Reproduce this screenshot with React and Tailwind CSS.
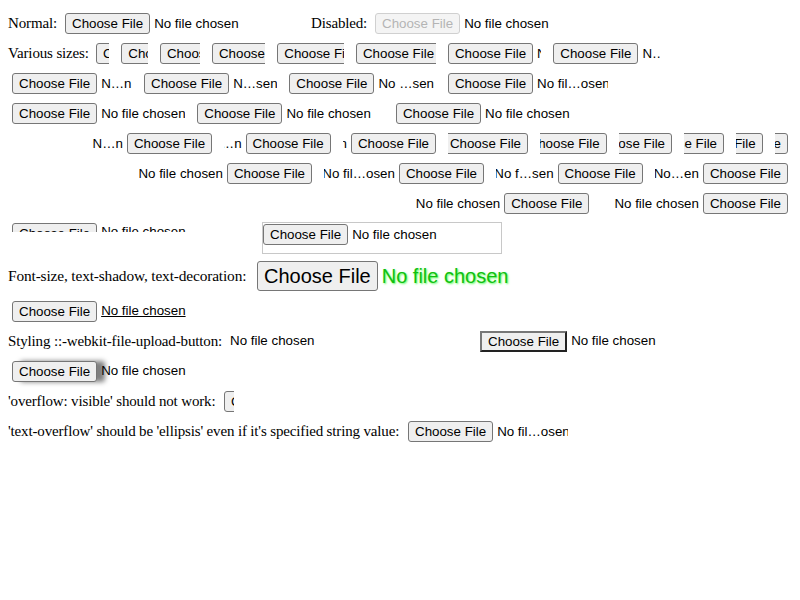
import React from "react";

const W = [
  "w-[13.33px]",
  "w-[26.67px]",
  "w-[40px]",
  "w-[53.33px]",
  "w-[66.67px]",
  "w-[80px]",
  "w-[93.33px]",
  "w-[106.67px]",
  "w-[120px]",
  "w-[133.33px]",
  "w-[146.67px]",
  "w-[160px]",
  "w-[173.33px]",
  "w-[186.67px]",
  "w-[200px]",
];

const LTR_TXT = [
  "N…n", "N…n", "N…n", "N…n", "N…n", "N…n", "N…n", "N…n", "N…n",
  "N…sen", "No …sen", "No fil…osen",
  "No file chosen", "No file chosen", "No file chosen",
];

const RTL_TXT = [
  "N…n", "N…n", "N…n", "N…n", "N…n", "N…n", "N…n", "N…n", "N…n",
  "No…en", "No f…sen", "No fil…osen",
  "No file chosen", "No file chosen", "No file chosen",
];

const sans = "font-['Liberation_Sans',Arial,sans-serif] tracking-normal";

const Btn = ({ disabled }) => (
  <span
    className={`inline-block shrink-0 rounded-[3px] border px-[6px] py-px text-[13.33px] leading-[17px] ${sans} ${
      disabled
        ? "border-[#d0d0d0] bg-[#f4f4f4] text-[#b4b4b4]"
        : "border-[#767676] bg-[#efefef] text-black"
    }`}
  >
    Choose File
  </span>
);

const FileInput = ({ w = "w-[238px]", text = "No file chosen", dir = "ltr", disabled, className = "" }) => (
  <span
    dir={dir}
    className={`flex shrink-0 items-center gap-1 overflow-hidden whitespace-nowrap ${w} ${className}`}
  >
    <Btn disabled={disabled} />
    <span dir="ltr" className={`shrink-0 text-[13.33px] leading-[17px] text-black ${sans}`}>
      {text}
    </span>
  </span>
);

const Row = ({ children, className = "h-[30px]" }) => (
  <div className={`flex items-center whitespace-nowrap ${className}`}>{children}</div>
);

// labels keep a fixed box so the inputs after them sit where the reference has them
const Label = ({ w, children }) => <span className={`shrink-0 ${w}`}>{children}</span>;

export default function App() {
  return (
    <div className="min-h-[600px] w-[800px] bg-white p-2 font-['Liberation_Serif',serif] text-[15px] tracking-[-0.15px] text-black">
      {/* normal / disabled */}
      <Row>
        <Label w="w-[49px]">Normal:</Label>
        <FileInput className="ml-2" />
        <Label w="w-[64px]">
          <span className="ml-2">Disabled:</span>
        </Label>
        <FileInput className="ml-2" disabled />
      </Row>

      {/* various sizes, ltr */}
      <Row>
        <Label w="w-[80px]">Various sizes:</Label>
        <div className="ml-2 flex gap-3">
          {W.slice(0, 8).map((w, i) => (
            <FileInput key={i} w={w} text={LTR_TXT[i]} />
          ))}
        </div>
      </Row>
      <Row>
        <div className="ml-1 flex gap-3">
          {W.slice(8, 12).map((w, i) => (
            <FileInput key={i} w={w} text={LTR_TXT[i + 8]} />
          ))}
        </div>
      </Row>
      <Row>
        <div className="ml-1 flex gap-3">
          {W.slice(12, 15).map((w, i) => (
            <FileInput key={i} w={w} text={LTR_TXT[i + 12]} />
          ))}
        </div>
      </Row>

      {/* various sizes, rtl */}
      <div dir="rtl">
        <Row>
          <div className="mr-1 flex gap-3">
            {W.slice(0, 9).map((w, i) => (
              <FileInput key={i} w={w} dir="rtl" text={RTL_TXT[i]} />
            ))}
          </div>
        </Row>
        <Row>
          <div className="mr-1 flex gap-3">
            {W.slice(9, 13).map((w, i) => (
              <FileInput key={i} w={w} dir="rtl" text={RTL_TXT[i + 9]} />
            ))}
          </div>
        </Row>
        <Row>
          <div className="mr-1 flex gap-3">
            {W.slice(13, 15).map((w, i) => (
              <FileInput key={i} w={w} dir="rtl" text={RTL_TXT[i + 13]} />
            ))}
          </div>
        </Row>
      </div>

      {/* height clipped + padded box */}
      <Row className="h-[38px] items-start pt-1">
        <FileInput className="ml-1 mt-px h-[9px] items-start" />
        <div className="ml-3 flex h-[32px] w-[240px] items-start border border-[#c8c8c8] pt-px">
          <FileInput />
        </div>
      </Row>

      {/* font-size, text-shadow, text-decoration */}
      <Row className="h-[40px]">
        <Label w="w-[241px]">
          <span className="text-[15.4px]">Font-size, text-shadow, text-decoration:</span>
        </Label>
        <span className="ml-2 flex items-center gap-1">
          <span className={`rounded-[3px] border border-[#767676] bg-[#efefef] px-[6px] py-px text-[20px] leading-[26px] ${sans}`}>
            Choose File
          </span>
          <span className={`text-[20px] text-[#10c010] [text-shadow:1px_1px_2px_#5cff5c] ${sans}`}>
            No file chosen
          </span>
        </span>
      </Row>

      <Row>
        <span className="ml-1 flex items-center gap-1">
          <Btn />
          <span className={`text-[13.33px] underline ${sans}`}>No file chosen</span>
        </span>
      </Row>

      {/* styled upload button */}
      <Row>
        <Label w="w-[214px]">Styling ::-webkit-file-upload-button:</Label>
        <span className={`ml-2 w-[246px] shrink-0 text-[13.33px] ${sans}`}>No file chosen</span>
        <span className="ml-1 flex items-center gap-1">
          <span
            className={`border-2 border-b-[#222] border-l-[#777] border-r-[#222] border-t-[#777] bg-[#efefef] px-[6px] text-[13.33px] leading-[17px] ${sans}`}
          >
            Choose File
          </span>
          <span className={`text-[13.33px] ${sans}`}>No file chosen</span>
        </span>
      </Row>

      <Row>
        <span className="ml-1 flex items-center gap-1">
          <span
            className={`relative rounded-[3px] border border-[#767676] bg-[#efefef] px-[6px] py-px text-[13.33px] leading-[17px] shadow-[8px_0_5px_rgba(0,0,0,0.5)] ${sans}`}
          >
            Choose File
          </span>
          <span className={`text-[13.33px] ${sans}`}>No file chosen</span>
        </span>
      </Row>

      <Row>
        <Label w="w-[208px]">'overflow: visible' should not work:</Label>
        <FileInput w="w-[10px]" className="ml-2" />
      </Row>

      <Row>
        <Label w="w-[392px]">'text-overflow' should be 'ellipsis' even if it's specified string value:</Label>
        <FileInput w="w-[160px]" text="No fil…osen" className="ml-2" />
      </Row>
    </div>
  );
}
